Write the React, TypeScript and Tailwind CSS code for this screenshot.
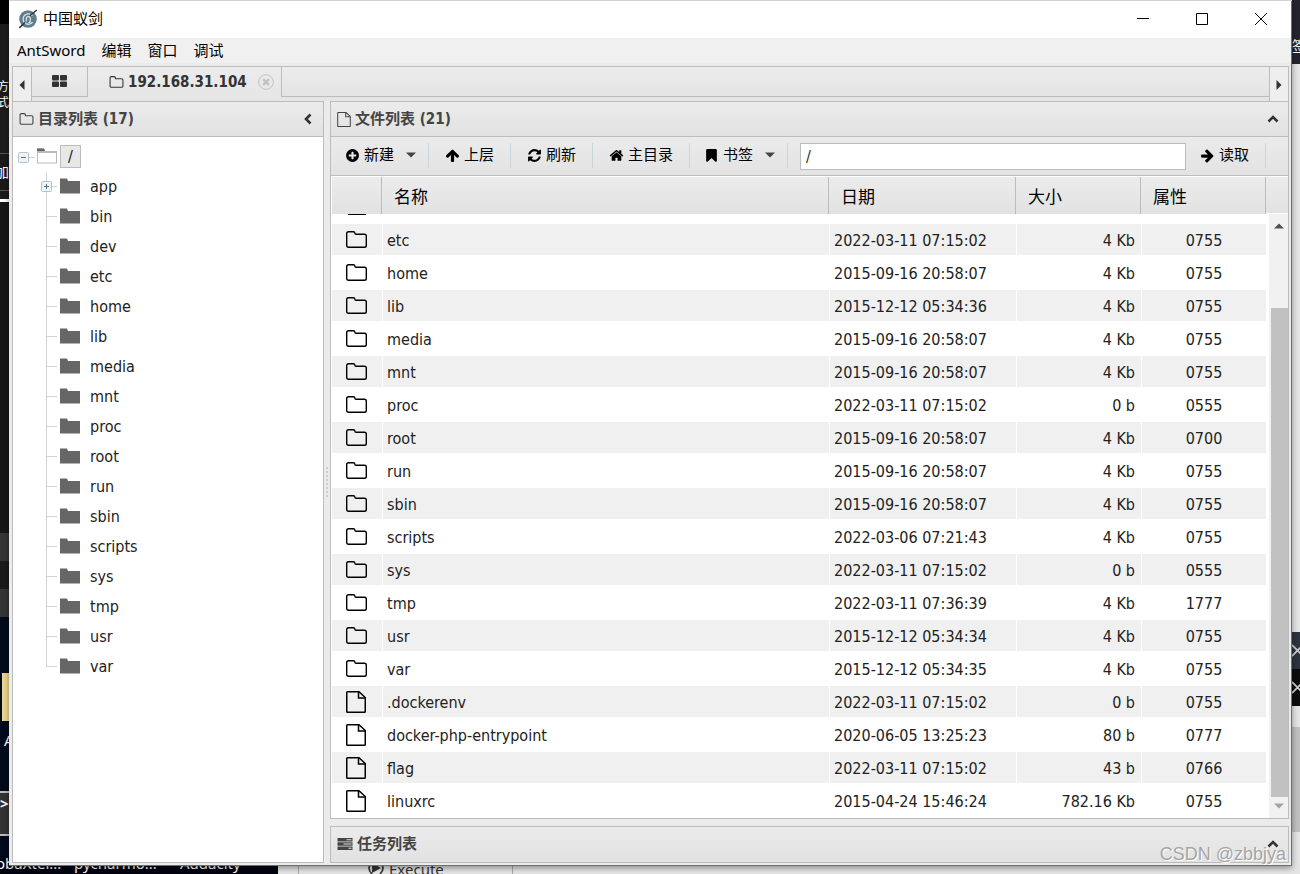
import type { ReactNode } from "react";
import clsx from "clsx";

const TREE = [
  "app", "bin", "dev", "etc", "home", "lib", "media", "mnt", "proc",
  "root", "run", "sbin", "scripts", "sys", "tmp", "usr", "var",
];

type Entry = { name: string; date: string; size: string; mode: string; file?: boolean };

const ENTRIES: Entry[] = [
  { name: "etc", date: "2022-03-11 07:15:02", size: "4 Kb", mode: "0755" },
  { name: "home", date: "2015-09-16 20:58:07", size: "4 Kb", mode: "0755" },
  { name: "lib", date: "2015-12-12 05:34:36", size: "4 Kb", mode: "0755" },
  { name: "media", date: "2015-09-16 20:58:07", size: "4 Kb", mode: "0755" },
  { name: "mnt", date: "2015-09-16 20:58:07", size: "4 Kb", mode: "0755" },
  { name: "proc", date: "2022-03-11 07:15:02", size: "0 b", mode: "0555" },
  { name: "root", date: "2015-09-16 20:58:07", size: "4 Kb", mode: "0700" },
  { name: "run", date: "2015-09-16 20:58:07", size: "4 Kb", mode: "0755" },
  { name: "sbin", date: "2015-09-16 20:58:07", size: "4 Kb", mode: "0755" },
  { name: "scripts", date: "2022-03-06 07:21:43", size: "4 Kb", mode: "0755" },
  { name: "sys", date: "2022-03-11 07:15:02", size: "0 b", mode: "0555" },
  { name: "tmp", date: "2022-03-11 07:36:39", size: "4 Kb", mode: "1777" },
  { name: "usr", date: "2015-12-12 05:34:34", size: "4 Kb", mode: "0755" },
  { name: "var", date: "2015-12-12 05:34:35", size: "4 Kb", mode: "0755" },
  { name: ".dockerenv", date: "2022-03-11 07:15:02", size: "0 b", mode: "0755", file: true },
  { name: "docker-php-entrypoint", date: "2020-06-05 13:25:23", size: "80 b", mode: "0777", file: true },
  { name: "flag", date: "2022-03-11 07:15:02", size: "43 b", mode: "0766", file: true },
  { name: "linuxrc", date: "2015-04-24 15:46:24", size: "782.16 Kb", mode: "0755", file: true },
];

const GLYPHS = {
  plus: "M1344 960v-128q0-26-19-45t-45-19h-256v-256q0-26-19-45t-45-19h-128q-26 0-45 19t-19 45v256h-256q-26 0-45 19t-19 45v128q0 26 19 45t45 19h256v256q0 26 19 45t45 19h128q26 0 45-19t19-45v-256h256q26 0 45-19t19-45zm320-64q0 209-103 385.5t-279.5 279.5-385.5 103-385.5-103-279.5-279.5-103-385.5 103-385.5 279.5-279.5 385.5-103 385.5 103 279.5 279.5 103 385.5z",
  up: "M1675 971q0 51-37 90l-75 75q-38 38-91 38-54 0-90-38l-294-293v704q0 52-37.5 84.5t-90.5 32.5h-128q-53 0-90.5-32.5t-37.5-84.5v-704l-294 293q-36 38-90 38t-90-38l-75-75q-38-38-38-90 0-53 38-91l651-651q35-37 90-37 54 0 91 37l651 651q37 39 37 91z",
  right: "M1600 960q0 54-37 91l-651 651q-39 37-91 37-51 0-90-37l-75-75q-38-38-38-91t38-91l293-293h-704q-52 0-84.5-37.5t-32.5-90.5v-128q0-53 32.5-90.5t84.5-37.5h704l-293-294q-38-36-38-90t38-90l75-75q38-38 90-38 53 0 91 38l651 651q37 35 37 90z",
  refresh: "M1639 1056q0 5-1 7-64 268-268 434.5t-478 166.5q-146 0-282.5-55t-243.5-157l-129 129q-19 19-45 19t-45-19-19-45v-448q0-26 19-45t45-19h448q26 0 45 19t19 45-19 45l-137 137q71 66 161 102t187 36q134 0 250-65t186-179q11-17 53-117 8-23 30-23h192q13 0 22.5 9.5t9.5 22.5zm25-800v448q0 26-19 45t-45 19h-448q-26 0-45-19t-19-45 19-45l138-138q-148-137-349-137-134 0-250 65t-186 179q-11 17-53 117-8 23-30 23h-199q-13 0-22.5-9.5t-9.5-22.5v-7q65-268 270-434.5t480-166.5q146 0 284 55.5t245 156.5l130-129q19-19 45-19t45 19 19 45z",
  home: "M1472 992v480q0 26-19 45t-45 19h-384v-384h-256v384h-384q-26 0-45-19t-19-45v-480q0-1 .5-3t.5-3l575-474 575 474q1 2 1 6zm223-69l-62 74q-8 9-21 11h-3q-13 0-21-7l-692-577-692 577q-12 8-24 7-13-2-21-11l-62-74q-8-10-7-23.5t11-21.5l719-599q32-26 76-26t76 26l244 204v-195q0-14 9-23t23-9h192q14 0 23 9t9 23v408l219 182q10 8 11 21.5t-7 23.5z",
  bookmark: "M1420 128q23 0 44 9 33 13 52.5 41t19.5 62v1289q0 34-19.5 62t-52.5 41q-19 8-44 8-48 0-83-32l-441-424-441 424q-36 33-83 33-23 0-44-9-33-13-52.5-41t-19.5-62v-1289q0-34 19.5-62t52.5-41q21-9 44-9h1048z",
  folder: "M1600 1312v-704q0-40-28-68t-68-28h-704q-40 0-68-28t-28-68v-64q0-40-28-68t-68-28h-320q-40 0-68 28t-28 68v960q0 40 28 68t68 28h1216q40 0 68-28t28-68zm128-704v704q0 92-66 158t-158 66h-1216q-92 0-158-66t-66-158v-960q0-92 66-158t158-66h320q92 0 158 66t66 158v32h672q92 0 158 66t66 158z",
};

function Glyph({ name, className }: { name: keyof typeof GLYPHS; className?: string }) {
  return (
    <svg viewBox="0 0 1792 1792" fill="currentColor" aria-hidden="true" className={clsx("shrink-0", className)}>
      <path d={GLYPHS[name]} />
    </svg>
  );
}

function FileGlyph({ className }: { className?: string }) {
  return (
    <svg viewBox="0 0 20 22" fill="none" stroke="currentColor" strokeWidth="1.5" aria-hidden="true" className={clsx("shrink-0", className)}>
      <path d="M1.5 .75H13L19.25 6.5V20.5a.75.75 0 0 1-.75.75H1.5a.75.75 0 0 1-.75-.75V1.5A.75.75 0 0 1 1.5.75Z" />
      <path d="M12.5 1V7H19" />
    </svg>
  );
}

function FolderOutline() {
  return (
    <svg viewBox="0 0 21 17" fill="none" stroke="currentColor" strokeWidth="1.4" aria-hidden="true" className="ml-[14px] h-[17px] w-[21px]">
      <path d="M2.5 .7H7.2Q8.9 .7 8.9 2.2Q8.9 3.2 10 3.2H18.5Q20.3 3.2 20.3 5V14.5Q20.3 16.3 18.5 16.3H2.5Q.7 16.3 .7 14.5V2.5Q.7 .7 2.5 .7Z" />
    </svg>
  );
}

function TreeFolder({ open }: { open?: boolean }) {
  return (
    <svg viewBox="0 0 20 16" aria-hidden="true" className="mb-[3px] h-4 w-5 shrink-0">
      <path d="M0 .5H7L8 3H20V15.5H0Z" fill={open ? "#b9b9b9" : "#666"} />
      {open && <path d="M0 .5H7L8 3H0Z" fill="#666" />}
      {open && <path d="M1 5H19V14.5H1Z" fill="#fff" />}
    </svg>
  );
}

function Toggle({ open }: { open?: boolean }) {
  return (
    <svg viewBox="0 0 11 11" aria-hidden="true" className="h-[11px] w-[11px] shrink-0">
      <rect x=".5" y=".5" width="10" height="10" rx="1" fill="#eef3f6" stroke="#b4c3cb" />
      <path d={open ? "M3 5.5H8" : "M3 5.5H8M5.5 3V8"} stroke="#4f7388" />
    </svg>
  );
}

function Chevron({ dir }: { dir: "up" | "left" }) {
  return (
    <svg viewBox="0 0 12 12" fill="none" stroke="#333" strokeWidth="2.6" aria-hidden="true" className="h-3 w-3">
      <path d={dir === "up" ? "M1.5 8.5L6 4L10.5 8.5" : "M8.5 1.5L4 6L8.5 10.5"} />
    </svg>
  );
}

function Caret({ dir, className }: { dir: "up" | "down" | "left" | "right"; className?: string }) {
  const d = {
    up: "M0 7.5L5 2.5L10 7.5Z",
    down: "M0 2.5L5 7.5L10 2.5Z",
    left: "M7.5 0L2.5 5L7.5 10Z",
    right: "M2.5 0L7.5 5L2.5 10Z",
  }[dir];
  return (
    <svg viewBox="0 0 10 10" fill="currentColor" aria-hidden="true" className={clsx("h-[10px] w-[10px] shrink-0", className)}>
      <path d={d} />
    </svg>
  );
}

function Logo() {
  return (
    <svg viewBox="0 0 20 20" aria-hidden="true" className="h-5 w-5">
      <circle cx="10" cy="10" r="8.8" fill="#5f7f8c" />
      <path d="M14.5 7A5.2 5.2 0 1 0 14.6 13" fill="none" stroke="#dfe8eb" strokeWidth="1.2" />
      <path d="M8.3 12.5V9.6a2 2 0 0 1 4 0v2.2a2 2 0 0 1-2 2" fill="none" stroke="#dfe8eb" strokeWidth="1.2" />
      <path d="M18.8 1L12 6.5M7 13.5L1.3 18.8" stroke="#2c3a42" strokeWidth="1.6" />
    </svg>
  );
}

function PanelHeader({ icon, title, dir }: { icon: ReactNode; title: string; dir: "up" | "left" }) {
  return (
    <div className="flex h-[34px] shrink-0 items-center gap-1 bg-gradient-to-b from-[#ebebeb] to-[#e2e2e2] pl-[6px] pr-[9px] text-[#444]">
      {icon}
      <h2 className="flex-1 text-[15px] leading-5 font-bold">{title}</h2>
      <button type="button" aria-label={`收起 ${title}`}>
        <Chevron dir={dir} />
      </button>
    </div>
  );
}

function ToolButton({ glyph, label, menu, className }: { glyph: keyof typeof GLYPHS; label: string; menu?: boolean; className?: string }) {
  return (
    <button type="button" className={clsx("flex h-[25px] items-center gap-1 border-r border-[#c9d5dc] text-[15px] text-black", className)}>
      <Glyph name={glyph} className="h-[15px] w-[15px]" />
      <span>{label}</span>
      {menu && <Caret dir="down" className="ml-2 text-[#444]" />}
    </button>
  );
}

function TreePanel() {
  return (
    <aside className="flex w-[312px] shrink-0 flex-col border border-[#bcbcbc] bg-white">
      <PanelHeader icon={<Glyph name="folder" className="h-[15px] w-[15px]" />} title="目录列表 (17)" dir="left" />
      <div className="flex-1 border-t border-[#bcbcbc] pt-[5px] text-base text-[#222]">
        <div className="flex h-[30px] items-center pl-[5px]">
          <Toggle open />
          <span className="mr-[2px] h-px w-[6px] bg-[#d3d3d3]" />
          <TreeFolder open />
          <span className="mb-px ml-[3px] h-[23px] w-[21px] border border-[#bcbcbc] bg-[#e8e8e8] text-center leading-[22px]">/</span>
        </div>
        <ul>
          {TREE.map((name, i) => (
            <li key={name} className="flex h-[30px] items-center pl-7">
              <span className="flex h-full w-[19px] flex-col">
                <span className="mr-[3px] ml-[5px] h-[15px] border-b border-l border-[#d3d3d3]" />
                <span className={clsx("ml-[5px] h-[15px]", i < TREE.length - 1 && "border-l border-[#d3d3d3]")} />
                {i === 0 && (
                  <span className="-mt-[21px] h-[21px]">
                    <Toggle />
                  </span>
                )}
              </span>
              <TreeFolder />
              <a href={`#${name}`} className="ml-[10px]">{name}</a>
            </li>
          ))}
        </ul>
      </div>
    </aside>
  );
}

function FileTable() {
  const head = "h-[37px] border-r border-[#bcbcbc] bg-gradient-to-b from-[#ececec] to-[#e2e2e2] p-0 pl-3 pt-[2px] text-left text-[17px] leading-5 font-normal";
  return (
    <div className="flex flex-1 bg-white pl-px pt-px">
      <table className="h-fit flex-1 table-fixed border-separate border-spacing-0 text-base text-[#222]">
        <colgroup>
          <col className="w-[50px]" />
          <col />
          <col className="w-[187px]" />
          <col className="w-[125px]" />
          <col className="w-[125px]" />
        </colgroup>
        <thead className="text-black">
          <tr>
            <th className={head} aria-label="类型" />
            <th className={head}>名称</th>
            <th className={head}>日期</th>
            <th className={head}>大小</th>
            <th className={head}>属性</th>
          </tr>
        </thead>
        <tbody>
          <tr aria-hidden="true">
            <td className="h-[9px] p-0 align-top">
              <div className="ml-4 h-px w-[18px] bg-black" />
            </td>
          </tr>
          {ENTRIES.map((e, i) => {
            const base = clsx("h-[33px] border-y border-white p-0", i % 2 === 0 && "bg-[#f0f0f0]");
            const cell = clsx(base, "border-l pt-[2px] leading-[29px]");
            return (
              <tr key={e.name}>
                <td className={clsx(base, "text-black")}>
                  {e.file ? <FileGlyph className="ml-[14px] h-[22px] w-5" /> : <FolderOutline />}
                </td>
                <td className={clsx(cell, "pl-1")}>{e.name}</td>
                <td className={clsx(cell, "pl-1")}>{e.date}</td>
                <td className={clsx(cell, "pr-[6px] text-right")}>{e.size}</td>
                <td className={clsx(cell, "text-center")}>{e.mode}</td>
              </tr>
            );
          })}
        </tbody>
      </table>
      <div className="flex w-[22px] shrink-0 flex-col">
        <div className="h-9 bg-gradient-to-b from-[#ececec] to-[#e2e2e2]" />
        <div className="ml-[3px] mt-px flex flex-1 flex-col items-center bg-[#f1f1f1]">
          <Caret dir="up" className="mt-[7px] text-[#505050]" />
          <div className="mt-[77px] w-[17px] flex-1 self-end bg-[#c1c1c1]" />
          <Caret dir="down" className="mb-[7px] mt-1 text-[#a3a3a3]" />
        </div>
      </div>
    </div>
  );
}

function FilePanel() {
  return (
    <section className="flex flex-1 flex-col border border-[#bcbcbc]">
      <PanelHeader icon={<FileGlyph className="h-[15px] w-[14px]" />} title="文件列表 (21)" dir="up" />
      <div className="flex h-10 items-center border-y border-[#bcbcbc] bg-gradient-to-b from-[#ebebeb] to-[#e3e3e3] pb-[2px] pl-[14px] pr-[22px]">
        <ToolButton glyph="plus" label="新建" menu className="mr-4 pr-3" />
        <ToolButton glyph="up" label="上层" className="mr-4 pr-4" />
        <ToolButton glyph="refresh" label="刷新" className="mr-4 pr-4" />
        <ToolButton glyph="home" label="主目录" className="mr-[14px] pr-4" />
        <ToolButton glyph="bookmark" label="书签" menu className="mr-3 pr-3" />
        <input
          aria-label="路径"
          defaultValue="/"
          className="mt-[3px] h-[27px] min-w-0 flex-1 border border-[#bcbcbc] bg-white px-[5px] text-base text-[#333] outline-none"
        />
        <ToolButton glyph="right" label="读取" className="pl-[14px] pr-4" />
      </div>
      <FileTable />
    </section>
  );
}

function TabBar() {
  return (
    <nav className="flex h-[35px] border-x border-t border-[#bcbcbc] bg-[#e5e5e5]">
      <button type="button" aria-label="向左" className="flex w-[19px] items-center justify-center border-r border-[#bcbcbc] bg-[#eee] pt-[2px] text-[#333]">
        <Caret dir="left" />
      </button>
      <button type="button" aria-label="主页" className="flex h-[30px] w-14 items-center justify-center border-b border-r border-[#bcbcbc] bg-gradient-to-b from-[#ececec] to-[#e4e4e4] pb-[2px]">
        <svg viewBox="0 0 15 12" fill="#333" aria-hidden="true" className="h-3 w-[15px]">
          <path d="M1 0H6Q7 0 7 1V4.5Q7 5.5 6 5.5H1Q0 5.5 0 4.5V1Q0 0 1 0ZM9 0H14Q15 0 15 1V4.5Q15 5.5 14 5.5H9Q8 5.5 8 4.5V1Q8 0 9 0ZM1 6.5H6Q7 6.5 7 7.5V11Q7 12 6 12H1Q0 12 0 11V7.5Q0 6.5 1 6.5ZM9 6.5H14Q15 6.5 15 7.5V11Q15 12 14 12H9Q8 12 8 11V7.5Q8 6.5 9 6.5Z" />
        </svg>
      </button>
      <div className="flex h-[30px] w-[194px] items-center border-r border-[#bcbcbc] bg-gradient-to-b from-[#ececec] to-[#e6e6e6] pl-[21px] text-[#333]">
        <Glyph name="folder" className="h-[15px] w-[15px]" />
        <span className="ml-1 flex-1 text-[15px] font-bold">192.168.31.104</span>
        <button type="button" aria-label="关闭" className="mr-[7px]">
          <svg viewBox="0 0 16 16" fill="none" stroke="#c2c2c2" aria-hidden="true" className="h-4 w-4">
            <circle cx="8" cy="8" r="7.3" />
            <path d="M5.2 5.2L10.8 10.8M10.8 5.2L5.2 10.8" strokeWidth="2.4" />
          </svg>
        </button>
      </div>
      <div className="h-[30px] flex-1 border-b border-[#bcbcbc] bg-gradient-to-b from-[#ececec] to-[#e4e4e4]" />
      <button type="button" aria-label="向右" className="flex w-[19px] items-center justify-center border-l border-[#bcbcbc] bg-[#eee] pt-[2px] text-[#333]">
        <Caret dir="right" />
      </button>
    </nav>
  );
}

function DesktopCross({ className }: { className: string }) {
  return (
    <svg viewBox="0 0 8 37" fill="none" stroke="#ccc" strokeWidth="1.8" className={clsx("h-[37px] w-2", className)}>
      <path d="M0 13L12 25M0 24L12 12" />
    </svg>
  );
}

// Slivers of the desktop that show round the window
function Desktop() {
  return (
    <div aria-hidden="true" className="absolute inset-0 overflow-hidden bg-[#e4e4e4] text-[15px] text-white">
      <div className="flex h-full justify-between">
        <div className="flex w-[9px] flex-col bg-[#030a1c]">
          <div className="h-6 bg-black" />
          <div className="flex h-[129px] items-center justify-end overflow-hidden bg-[#1c1c1c] pt-3 text-xs">方式</div>
          <div className="flex h-[38px] items-center justify-end overflow-hidden border-y border-[#555] bg-[#1a1a1a] text-sm">加</div>
          <div className="h-2 bg-[#1a1a1a]" />
          <div className="h-[3px] bg-white" />
          <div className="h-[331px] bg-[#161616]" />
          <div className="h-7 bg-[#353535]" />
          <div className="h-7 bg-[#1a1a1a]" />
          <div className="h-7 bg-[#353535]" />
          <div className="mt-14 ml-[2px] h-12 bg-[#e9d58f]" />
          <div className="mt-2 h-6 overflow-hidden pl-1">A</div>
          <div className="mt-[38px] h-[45px] overflow-hidden border-y-2 border-[#bbb] bg-[#333] leading-5 font-bold">&gt;</div>
        </div>
        <div className="flex w-2 flex-col">
          <div className="h-16 overflow-hidden bg-[#24242e] pt-9 text-sm leading-5">签</div>
          <DesktopCross className="mt-[568px] bg-[#2d333f]" />
          <DesktopCross className="bg-[#0c0c0c]" />
          <div className="mt-[21px] h-[105px] bg-[#c0c0c0]" />
        </div>
      </div>
      <div className="absolute inset-x-0 bottom-0 flex h-[18px] leading-[18px] whitespace-nowrap">
        <div className="flex w-[278px] bg-[#01040f]">
          <span className="-ml-1 w-[78px] leading-[14px]">obaXter...</span>
          <span className="w-[106px] leading-[14px]">pycharmo...</span>
          <span className="leading-[14px]">Audacity</span>
        </div>
        <div className="ml-5 flex w-[215px] items-end gap-1 border-x border-[#aaa] pl-[68px] text-[#333]">
          <svg viewBox="0 0 18 14" className="h-[14px] w-[18px]">
            <path d="M5 2Q-1 8 5 14M13 2Q19 8 13 14" fill="none" stroke="#333" strokeWidth="1.6" />
            <path d="M5 3L14 8L5 13Z" fill="#333" />
          </svg>
          <span className="-mb-1">Execute</span>
        </div>
      </div>
    </div>
  );
}

export default function App() {
  return (
    <div className="relative flex min-h-screen font-['Noto_Sans','Noto_Sans_CJK_SC',sans-serif]">
      <Desktop />
      <div className="relative mb-2 ml-[9px] mr-2 mt-px flex flex-1 flex-col border-b border-r border-[#6e6e6e] bg-[#ebebeb] shadow-[0_2px_6px_#0006]">
        <header className="flex h-[37px] items-center bg-white pb-[2px] pl-[9px] pr-6">
          <Logo />
          <h1 className="ml-[5px] flex-1 text-[15px]">中国蚁剑</h1>
          <div className="flex gap-[47px]">
            <button type="button" aria-label="最小化">
              <svg viewBox="0 0 12 12" className="h-3 w-3"><path d="M0 5.5H12" stroke="#000" /></svg>
            </button>
            <button type="button" aria-label="最大化">
              <svg viewBox="0 0 12 12" className="h-3 w-3"><path d="M.5 .5H11.5V11.5H.5Z" fill="none" stroke="#000" /></svg>
            </button>
            <button type="button" aria-label="关闭窗口">
              <svg viewBox="0 0 12 12" className="h-3 w-3"><path d="M0 0L12 12M12 0L0 12" stroke="#000" /></svg>
            </button>
          </div>
        </header>
        <div className="flex h-[25px] items-center gap-4 bg-[#f0f0f0] pl-2 text-[15px] text-black">
          <button type="button">AntSword</button>
          <button type="button">编辑</button>
          <button type="button">窗口</button>
          <button type="button">调试</button>
        </div>
        <div className="flex flex-1 flex-col pb-[2px] pl-[3px] pr-[2px] pt-[3px] font-['DejaVu_Sans_Condensed','Noto_Sans','Noto_Sans_CJK_SC',sans-serif]">
          <TabBar />
          <main className="flex flex-1">
            <TreePanel />
            <div className="flex w-[6px] items-center justify-center">
              <div className="h-[30px] border-l-2 border-dotted border-[#ccc]" />
            </div>
            <div className="flex flex-1 flex-col gap-[7px]">
              <FilePanel />
              <section className="border border-[#bcbcbc] bg-[#e2e2e2] pb-px">
                <PanelHeader
                  icon={
                    <svg viewBox="0 0 15 12" aria-hidden="true" className="h-3 w-4">
                      <path d="M0 0H15V3.4H0ZM0 4.3H15V7.7H0ZM0 8.6H15V12H0Z" fill="#444" />
                      <path d="M9 1.2H14V2.2H9ZM6 5.5H14V6.5H6ZM11 9.8H14V10.8H11Z" fill="#ddd" />
                    </svg>
                  }
                  title="任务列表"
                  dir="up"
                />
              </section>
            </div>
          </main>
        </div>
      </div>
      <p className="absolute bottom-[8px] right-[14px] font-['Liberation_Sans',sans-serif] text-[18px] leading-6 text-[#a5a5a5] [text-shadow:1px_1px_0_#fff]">
        CSDN @zbbjya
      </p>
    </div>
  );
}
